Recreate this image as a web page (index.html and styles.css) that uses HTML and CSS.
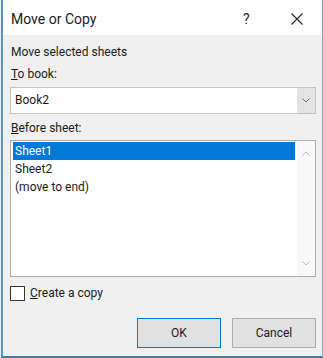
FILE: index.html
```html
<!DOCTYPE html>
<html lang="en">

<head>
    <meta charset="UTF-8" />
    <meta name="viewport" content="width=device-width, initial-scale=1" />
    <title>Move or Copy</title>
    <link rel="stylesheet" href="styles.css">
</head>

<body>
    <div class="dialog">
        <div class="titlebar">
            <span class="title">Move or Copy</span>
            <span class="help">?</span>
            <span class="close">
                <svg width="12" height="12" viewBox="0 0 12 12">
                    <path d="M0.5 0.5 L11.5 11.5 M11.5 0.5 L0.5 11.5" stroke="#222" stroke-width="1.1" fill="none" />
                </svg>
            </span>
        </div>

        <div class="content">
            <div class="label first">Move selected sheets</div>
            <div class="label"><u>T</u>o book:</div>

            <div class="combo">
                <span class="combo-value">Book2</span>
                <span class="combo-btn">
                    <svg width="8" height="5" viewBox="0 0 8 5">
                        <path d="M0.5 0.5 L4 4 L7.5 0.5" stroke="#6a6a6a" fill="none" />
                    </svg>
                </span>
            </div>

            <div class="label"><u>B</u>efore sheet:</div>

            <div class="listbox">
                <div class="items">
                    <div class="item selected">Sheet1</div>
                    <div class="item">Sheet2</div>
                    <div class="item">(move to end)</div>
                </div>
                <div class="scrollbar">
                    <svg width="8" height="5" viewBox="0 0 8 5">
                        <path d="M0.5 4.5 L4 1 L7.5 4.5" stroke="#b8b8b8" fill="none" />
                    </svg>
                    <svg width="8" height="5" viewBox="0 0 8 5">
                        <path d="M0.5 0.5 L4 4 L7.5 0.5" stroke="#b8b8b8" fill="none" />
                    </svg>
                </div>
            </div>

            <label class="check">
                <span class="box"></span>
                <span><u>C</u>reate a copy</span>
            </label>

            <div class="buttons">
                <button class="btn primary">OK</button>
                <button class="btn">Cancel</button>
            </div>
        </div>
    </div>
</body>

</html>
```

FILE: styles.css
```css
body {
    margin: 0;
    background: #e6edf3;
    font-family: Roboto, "Noto Sans", sans-serif;
    font-size: 12px;
    color: #1a1a1a;
}

.dialog {
    margin-left: 1px;
    width: 319px;
    height: 356px;
    border-left: 2px solid #5b93c9;
    border-right: 1px solid #7aa9d6;
    border-bottom: 2px solid #3e7d95;
    background: #f0f0f0;
    display: flex;
    flex-direction: column;
}

.titlebar {
    height: 32px;
    padding-top: 3px;
    background: #fff;
    display: flex;
    align-items: center;
    padding-left: 8px;
}

.title {
    font-size: 14px;
    flex: 1;
}

.help {
    font-size: 14px;
    width: 47px;
    color: #222;
}

.close {
    width: 31px;
    display: flex;
    padding-left: 1px;
}

.content {
    padding: 0 6px 0 7px;
}

.label {
    height: 16px;
    line-height: 16px;
    margin-top: 6px;
    padding-left: 1px;
}

.label.first {
    margin-top: 9px;
}

.combo {
    margin-top: 5px;
    height: 25px;
    border: 1px solid #c2c2c2;
    background: #fff;
    display: flex;
}

.combo-value {
    flex: 1;
    line-height: 25px;
    padding-left: 4px;
}

.combo-btn {
    width: 18px;
    background: #e3e3e3;
    display: flex;
    align-items: center;
    justify-content: center;
}

.listbox {
    margin-top: 4px;
    height: 135px;
    border: 1px solid #adadad;
    background: #fff;
    display: flex;
}

.items {
    flex: 1;
    padding: 1px 2px 0 2px;
}

.item {
    height: 18px;
    line-height: 18px;
    padding-left: 2px;
}

.item.selected {
    background: #0078d7;
    color: #fff;
}

.scrollbar {
    width: 18px;
    background: #f8f8f8;
    display: flex;
    flex-direction: column;
    align-items: center;
    justify-content: space-between;
    padding: 10px 0 10px;
}

.check {
    margin-top: 8px;
    height: 16px;
    display: flex;
    align-items: center;
    gap: 5px;
}

.box {
    width: 13px;
    height: 13px;
    border: 1px solid #333;
    background: #fff;
}

.buttons {
    margin-top: 17px;
    display: flex;
    justify-content: flex-end;
    gap: 11px;
}

.btn {
    width: 84px;
    height: 30px;
    border: 1px solid #adadad;
    background: #e1e1e1;
    font-family: inherit;
    font-size: 12px;
    color: #1a1a1a;
    padding: 0;
}

.btn.primary {
    border-color: #0078d7;
}
```
